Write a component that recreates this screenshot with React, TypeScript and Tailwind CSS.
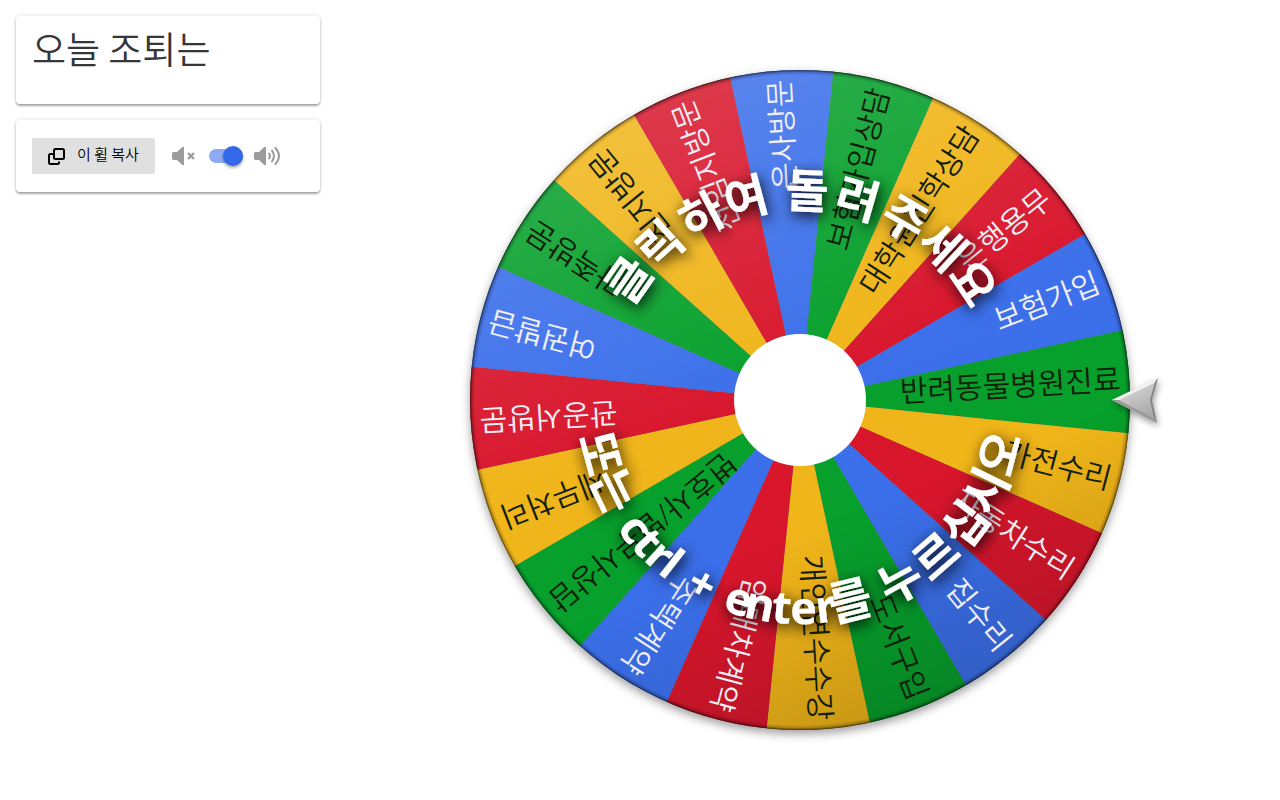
import React, { useState } from 'react';

const BLUE = '#3b6fea';
const GREEN = '#07a02c';
const YELLOW = '#f0b519';
const RED = '#d8162c';

const entries = [
    { label: '반려동물병원진료', color: GREEN },
    { label: '가전수리', color: YELLOW },
    { label: '자동차수리', color: RED },
    { label: '집수리', color: BLUE },
    { label: '도서구입', color: GREEN },
    { label: '개인연수수강', color: YELLOW },
    { label: '임대차계약', color: RED },
    { label: '주택계약', color: BLUE },
    { label: '변호사/법무사상담', color: GREEN },
    { label: '세무처리', color: YELLOW },
    { label: '관공서방문', color: RED },
    { label: '여권발급', color: BLUE },
    { label: '가족방문', color: GREEN },
    { label: '친지방문', color: YELLOW },
    { label: '전임지방문', color: RED },
    { label: '은사방문', color: BLUE },
    { label: '보험가입상담', color: GREEN },
    { label: '대학원진학상담', color: YELLOW },
    { label: '은행용무', color: RED },
    { label: '보험가입', color: BLUE },
];

// [character, angle on the circle in degrees, clockwise from the right]
const topHint: [string, number][] = [
    ['클', -145], ['릭', -132], ['하', -118], ['여', -105],
    ['돌', -88], ['려', -74], ['주', -60], ['세', -47], ['요', -34],
];

const bottomHint: [string, number][] = [
    ['또', 165], ['는', 154],
    ['c', 142], ['t', 137], ['r', 132], ['l', 128],
    ['+', 118],
    ['e', 107], ['n', 101], ['t', 95], ['e', 89], ['r', 83], ['를', 76],
    ['누', 61], ['르', 49], ['십', 37], ['시', 26], ['오', 15],
];

const RADIUS = 330;
const STEP = 360 / entries.length;
const START = -3.2;

const point = (deg: number, r: number) => {
    const rad = (deg * Math.PI) / 180;
    return `${(Math.cos(rad) * r).toFixed(2)} ${(Math.sin(rad) * r).toFixed(2)}`;
};

const slicePath = (mid: number) =>
    `M0 0 L${point(mid - STEP / 2, RADIUS)} A${RADIUS} ${RADIUS} 0 0 1 ${point(mid + STEP / 2, RADIUS)} Z`;

const Wheel: React.FC = () => (
    <svg
        className="block h-screen w-full cursor-pointer select-none font-['Open_Sans','Noto_Sans_CJK_KR',sans-serif]"
        viewBox="-400 -400 800 800"
        role="img"
        aria-label="돌림판"
    >
        <defs>
            <linearGradient id="shade" x1="0.2" y1="0" x2="0.6" y2="1">
                <stop offset="0" stopColor="#fff" stopOpacity="0.17" />
                <stop offset="0.5" stopColor="#fff" stopOpacity="0.01" />
                <stop offset="0.7" stopColor="#000" stopOpacity="0" />
                <stop offset="1" stopColor="#000" stopOpacity="0.16" />
            </linearGradient>
            <radialGradient id="rim" gradientUnits="userSpaceOnUse" cx="0" cy="0" r="330">
                <stop offset="0.985" stopColor="#000" stopOpacity="0" />
                <stop offset="0.994" stopColor="#000" stopOpacity="0.2" />
                <stop offset="1" stopColor="#000" stopOpacity="0.65" />
            </radialGradient>
            <linearGradient id="metal" x1="0" y1="0" x2="0.5" y2="1">
                <stop offset="0" stopColor="#e6e6e6" />
                <stop offset="1" stopColor="#a8a8a8" />
            </linearGradient>
            <filter id="wheelShadow" x="-10%" y="-10%" width="120%" height="120%">
                <feDropShadow dx="0" dy="4" stdDeviation="5" floodColor="#000" floodOpacity="0.38" />
            </filter>
            <filter id="hintShadow" x="-10%" y="-10%" width="120%" height="120%">
                <feDropShadow dx="2" dy="4" stdDeviation="7" floodColor="#000" floodOpacity="1" />
            </filter>
            <filter id="pointerShadow" x="-30%" y="-30%" width="160%" height="170%">
                <feDropShadow dx="1" dy="3" stdDeviation="3" floodColor="#000" floodOpacity="0.4" />
            </filter>
        </defs>

        <circle r={RADIUS} fill="#777" filter="url(#wheelShadow)" />
        {entries.map((entry, i) => (
            <path key={entry.label} d={slicePath(START + i * STEP)} fill={entry.color} />
        ))}
        <circle r={RADIUS} fill="url(#shade)" />
        {entries.map((entry, i) => (
            <text
                key={entry.label}
                transform={`rotate(${START + i * STEP})`}
                x="321"
                y="8"
                fontSize="30"
                fontWeight="350"
                textAnchor="end"
                fill={entry.color === RED || entry.color === BLUE ? '#f0eef6' : '#12200a'}
            >
                {entry.label}
            </text>
        ))}
        <circle r={RADIUS} fill="url(#rim)" />
        <circle r="66" fill="#fff" />

        <g filter="url(#hintShadow)" fill="#fff" fontSize="47" fontWeight="700" textAnchor="middle">
            {topHint.map(([char, angle]) => (
                <text key={angle} transform={`rotate(${angle + 90})`} y="-192">
                    {char}
                </text>
            ))}
            {bottomHint.map(([char, angle]) => (
                <text key={angle} transform={`rotate(${angle - 90})`} y="224" fontSize={/[a-z+]/.test(char) ? 45 : 47}>
                    {char}
                </text>
            ))}
        </g>

        <g filter="url(#pointerShadow)">
            <path d="M312 0 L358 -22 L352 0 L357 23 Z" fill="url(#metal)" />
            <path d="M312 0 L358 -22 L354 -17 L319 0 Z" fill="#f2f2f2" />
            <path d="M312 0 L357 23 L353 18 L319 0 Z" fill="#9a9a9a" />
            <path d="M358 -22 L352 0 L357 23 L354 18 L350 0 L355 -18 Z" fill="#858585" />
        </g>
    </svg>
);

const App: React.FC = () => {
    const [soundOn, setSoundOn] = useState(true);

    return (
        <div className="flex min-h-screen bg-white font-['Noto_Sans_CJK_KR',sans-serif]">
            <aside className="flex w-80 shrink-0 flex-col gap-4 pl-4 pt-4">
                <section className="rounded bg-white px-4 pt-2 pb-8 shadow-[0_2px_2px_rgba(0,0,0,0.3),0_0_4px_rgba(0,0,0,0.14)]">
                    <h1 className="text-[37px] font-[350] leading-[48px] text-[#363636]">오늘 조퇴는</h1>
                </section>

                <section className="flex items-center rounded bg-white px-4 py-[18px] shadow-[0_2px_2px_rgba(0,0,0,0.3),0_0_4px_rgba(0,0,0,0.14)]">
                    <button
                        type="button"
                        className="flex h-9 items-center gap-3 whitespace-nowrap rounded-xs bg-[#e0e0e0] px-4 text-[15px] font-[350] leading-5 text-black"
                    >
                        <svg className="h-[17px] w-[17px]" viewBox="0 0 17 17" fill="none" stroke="currentColor" strokeWidth="2">
                            <rect x="6" y="1" width="10" height="10" rx="1.5" />
                            <path d="M5 6H2.5A1.5 1.5 0 0 0 1 7.500V14.500A1.500 1.500 0 0 0 2.500 16H9.500A1.500 1.500 0 0 0 11 14.500V13.500" />
                        </svg>
                        <span className="pb-1">이 휠 복사</span>
                    </button>

                    <svg className="ml-4 h-5 w-6 text-[#9c9c9c]" viewBox="0 0 24 20" fill="currentColor" aria-hidden="true">
                        <path d="M2.500 6H6L11 1.300Q13 0 13 2V18Q13 20 11 18.700L6 14H2.500Q1 14 1 12.500V7.500Q1 6 2.500 6Z" />
                        <path d="M17 7l6 6M23 7l-6 6" stroke="currentColor" strokeWidth="2.200" />
                    </svg>
                    <input
                        type="checkbox"
                        role="switch"
                        aria-label="소리"
                        checked={soundOn}
                        onChange={(e) => setSoundOn(e.target.checked)}
                        className="relative ml-[14px] mr-[10px] h-[14px] w-[34px] shrink-0 cursor-pointer appearance-none rounded-full bg-[#b5b5b5] before:absolute before:-top-[3px] before:left-0 before:h-5 before:w-5 before:rounded-full before:bg-white before:shadow-[0_2px_3px_rgba(0,0,0,0.35)] checked:bg-[#8eabf2] checked:before:left-[14px] checked:before:bg-[#3369e8]"
                    />
                    <svg className="h-5 w-7 text-[#9c9c9c]" viewBox="0 0 28 20" fill="currentColor" aria-hidden="true">
                        <path d="M2.500 6H6L11 1.300Q13 0 13 2V18Q13 20 11 18.700L6 14H2.500Q1 14 1 12.500V7.500Q1 6 2.500 6Z" />
                        <g fill="none" stroke="currentColor" strokeWidth="2" strokeLinecap="round">
                            <path d="M16 7.500Q17.800 10 16 12.500" />
                            <path d="M19 4.500Q23 10 19 15.500" />
                            <path d="M22.500 2Q29.500 10 22.500 18" />
                        </g>
                    </svg>
                </section>
            </aside>

            <main className="min-w-0 flex-1">
                <Wheel />
            </main>
        </div>
    );
};

export default App;
